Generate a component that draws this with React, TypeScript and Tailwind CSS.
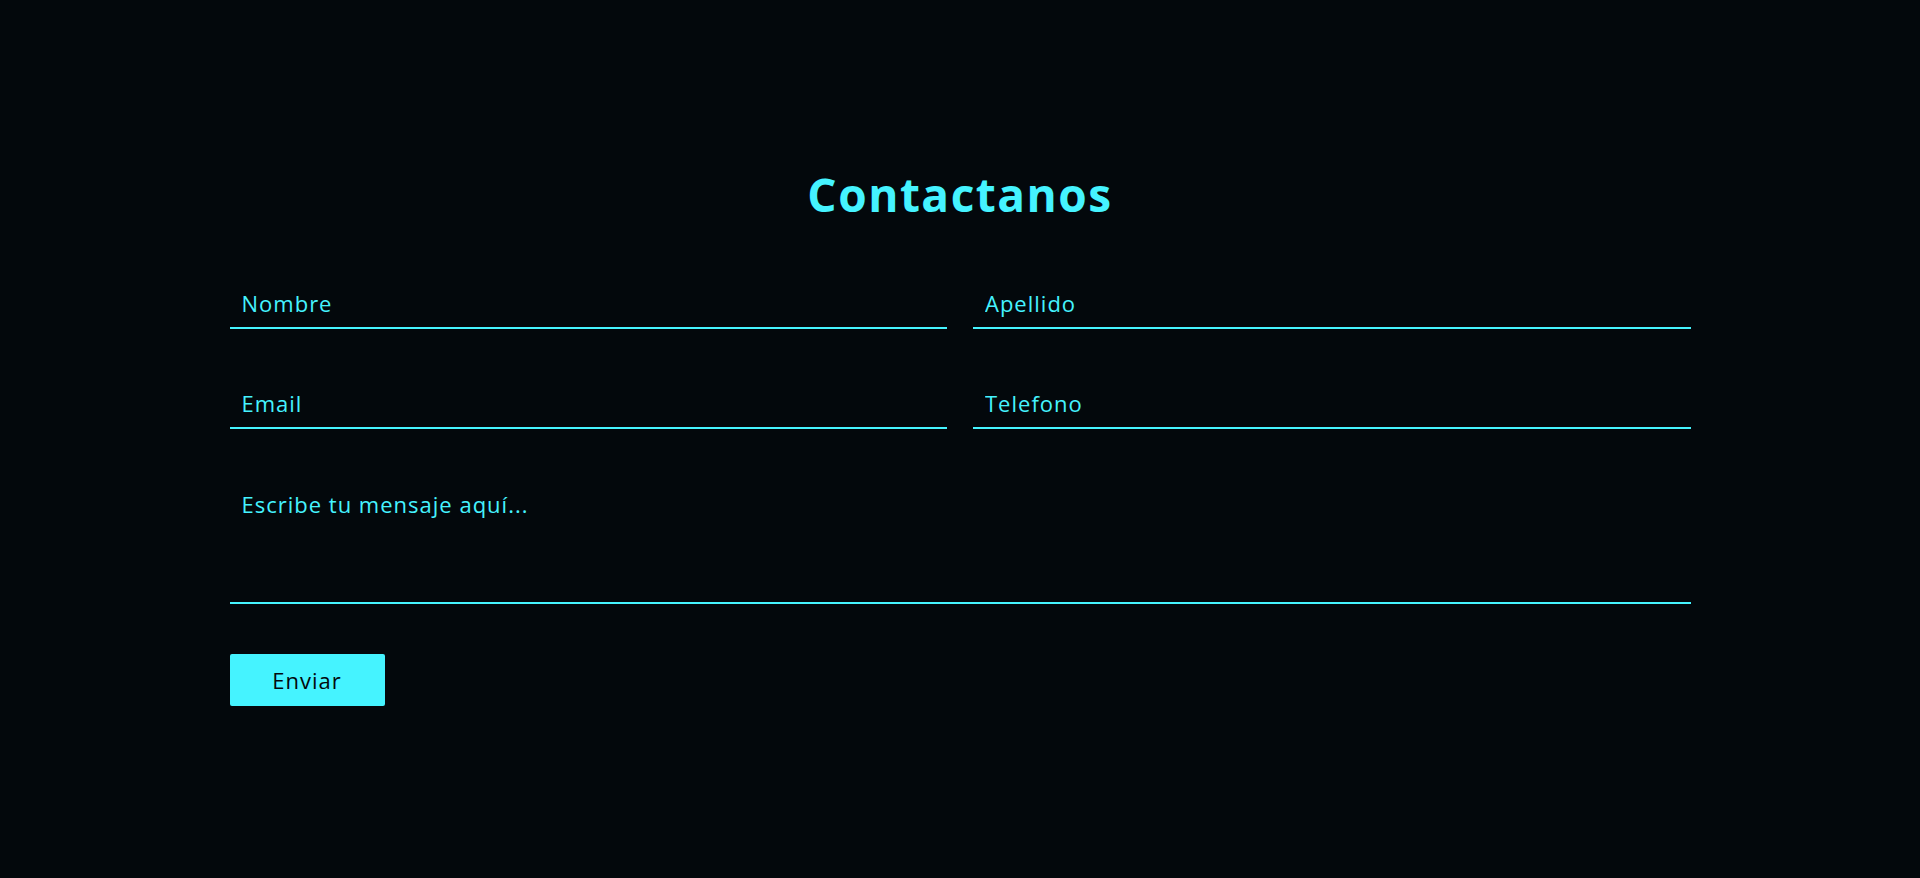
import React from "react";

export default function App() {
  return (
    <div className="w-full h-[878px] bg-[#03080c] font-['Open_Sans',sans-serif]">
      <div className="w-[1461px] mx-auto pt-[160px]">
        <h2 className="text-center text-[46px] leading-[68px] font-bold text-[#45f3ff] tracking-[1.5px]">
          Contactanos
        </h2>
        <form className="mt-[57px] flex flex-col" onSubmit={(e) => e.preventDefault()}>
          <div className="grid grid-cols-2 gap-x-[26px] gap-y-[56px]">
            {["Nombre", "Apellido", "Email", "Telefono"].map((p) => (
              <input
                key={p}
                placeholder={p}
                className="h-[44px] w-full bg-transparent border-b-2 border-[#45f3ff] pl-[12px] pr-[12px] pb-[7px] pt-0 text-[22px] tracking-[1px] text-[#45f3ff] placeholder:text-[#45f3ff] outline-none"
              />
            ))}
          </div>
          <textarea
            placeholder="Escribe tu mensaje aquí..."
            className="mt-[47px] h-[128px] w-full resize-none bg-transparent border-b-2 border-[#45f3ff] px-[12px] pt-[13px] pb-[10px] text-[22px] leading-[30px] tracking-[1px] text-[#45f3ff] placeholder:text-[#45f3ff] outline-none"
          />
          <button
            type="submit"
            className="mt-[50px] w-[155px] h-[52px] bg-[#45f3ff] rounded-[2px] text-[22px] tracking-[1px] text-[#03080c]"
          >
            Enviar
          </button>
        </form>
      </div>
    </div>
  );
}
